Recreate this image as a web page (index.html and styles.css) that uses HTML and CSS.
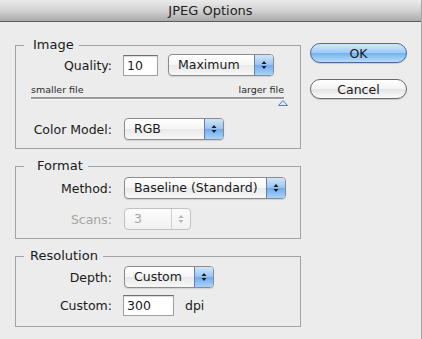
FILE: index.html
```html
<!DOCTYPE html>
<html lang="en">
<head>
    <meta charset="UTF-8">
    <title>JPEG Options</title>
    <link rel="stylesheet" href="styles.css">
</head>
<body>
    <div class="window">
        <div class="titlebar">JPEG Options</div>
        <div class="content">
            <div class="groups">
                <fieldset class="group group-image">
                    <legend>Image</legend>
                    <div class="row">
                        <span class="label">Quality:</span>
                        <span class="field field-quality">10</span>
                        <div class="popup popup-quality">
                            <span class="popup-text">Maximum</span>
                            <span class="popup-arrows">
                                <svg width="6" height="10" viewBox="0 0 6 10"><path d="M3 1L5.5 4H0.5Z M3 9L5.5 6H0.5Z" fill="#1c1c1c"/></svg>
                            </span>
                        </div>
                    </div>
                    <div class="slider">
                        <div class="slider-labels">
                            <span>smaller file</span>
                            <span>larger file</span>
                        </div>
                        <div class="slider-track"></div>
                        <div class="slider-thumb">
                            <svg width="10" height="6" viewBox="0 0 10 6"><path d="M5 0.5L9.5 5.5H0.5Z" fill="#dce8f6" stroke="#5d7fae"/></svg>
                        </div>
                    </div>
                    <div class="row row-color">
                        <span class="label">Color Model:</span>
                        <div class="popup popup-color">
                            <span class="popup-text">RGB</span>
                            <span class="popup-arrows">
                                <svg width="6" height="10" viewBox="0 0 6 10"><path d="M3 1L5.5 4H0.5Z M3 9L5.5 6H0.5Z" fill="#1c1c1c"/></svg>
                            </span>
                        </div>
                    </div>
                </fieldset>

                <fieldset class="group group-format">
                    <legend>Format</legend>
                    <div class="row">
                        <span class="label">Method:</span>
                        <div class="popup popup-method">
                            <span class="popup-text">Baseline (Standard)</span>
                            <span class="popup-arrows">
                                <svg width="6" height="10" viewBox="0 0 6 10"><path d="M3 1L5.5 4H0.5Z M3 9L5.5 6H0.5Z" fill="#1c1c1c"/></svg>
                            </span>
                        </div>
                    </div>
                    <div class="row row-scans">
                        <span class="label disabled">Scans:</span>
                        <div class="popup popup-scans disabled">
                            <span class="popup-text">3</span>
                            <span class="popup-arrows">
                                <svg width="6" height="10" viewBox="0 0 6 10"><path d="M3 1L5.5 4H0.5Z M3 9L5.5 6H0.5Z" fill="#b4b4b4"/></svg>
                            </span>
                        </div>
                    </div>
                </fieldset>

                <fieldset class="group group-resolution">
                    <legend>Resolution</legend>
                    <div class="row">
                        <span class="label">Depth:</span>
                        <div class="popup popup-depth">
                            <span class="popup-text">Custom</span>
                            <span class="popup-arrows">
                                <svg width="6" height="10" viewBox="0 0 6 10"><path d="M3 1L5.5 4H0.5Z M3 9L5.5 6H0.5Z" fill="#1c1c1c"/></svg>
                            </span>
                        </div>
                    </div>
                    <div class="row row-custom">
                        <span class="label">Custom:</span>
                        <span class="field field-custom">300</span>
                        <span class="unit">dpi</span>
                    </div>
                </fieldset>
            </div>

            <div class="buttons">
                <button type="button" class="btn btn-default">OK</button>
                <button type="button" class="btn">Cancel</button>
            </div>
        </div>
    </div>
</body>
</html>
```

FILE: styles.css
```css
body {
    margin: 0;
    font-family: "DejaVu Sans", sans-serif;
    font-size: 12.5px;
    color: #1a1a1a;
}
.window {
    width: 421px;
    height: 339px;
    background-color: #ececec;
    border-right: 1px solid #a4a4a4;
}
.titlebar {
    height: 21px;
    line-height: 21px;
    text-align: center;
    font-size: 13px;
    color: #222;
    background: linear-gradient(#ebebeb, #d2d2d2 50%, #aaaaaa);
    border-bottom: 1px solid #5e5e5e;
    border-top-right-radius: 5px;
}
.content {
    display: flex;
    padding: 15px 0 0 15px;
}
.groups {
    width: 286px;
}
.group {
    margin: 0 0 9px 0;
    padding: 0 0 8px 0;
    border: 1px solid #a3a3a3;
    min-inline-size: 0;
}
.group legend {
    line-height: 16px;
    font-size: 13px;
    padding: 0 5px 0 9px;
    margin-left: 8px;
}
.group-format legend {
    padding-left: 13px;
}
.group-resolution legend {
    padding-left: 6px;
}
.group-image {
    padding-top: 1px;
}
.group-format {
    padding-top: 3px;
}
.group-resolution {
    padding-top: 2px;
    padding-bottom: 10px;
}
.row {
    display: flex;
    align-items: center;
    height: 22px;
}
.label {
    width: 96px;
    margin-right: 11px;
    text-align: right;
    white-space: nowrap;
}
.disabled {
    color: #a5a5a5;
}
.row-color {
    margin-top: 12px;
}
.row-scans {
    margin-top: 9px;
}
.row-custom {
    margin-top: 6px;
}

.field {
    box-sizing: border-box;
    height: 21px;
    line-height: 20px;
    padding: 0 3px;
    background-color: #fff;
    border: 1px solid #a0a0a0;
    border-top-color: #6f6f6f;
    box-shadow: inset 0 1px 1px rgba(0, 0, 0, 0.15);
}
.field-quality {
    width: 35px;
}
.field-custom {
    width: 51px;
}
.unit {
    margin-left: 11px;
}

.popup {
    box-sizing: border-box;
    display: flex;
    height: 22px;
    margin-left: 1px;
    border: 1px solid #8c8c8c;
    border-radius: 4px;
    overflow: hidden;
    background: linear-gradient(#ffffff, #f5f5f5 50%, #e9e9e9 51%, #f7f7f7);
    box-shadow: 0 1px 1px rgba(0, 0, 0, 0.12);
}
.popup-text {
    flex: 1;
    padding-left: 9px;
    line-height: 20px;
    white-space: nowrap;
}
.popup-arrows {
    width: 18px;
    display: flex;
    align-items: center;
    justify-content: center;
    border-left: 1px solid #5e82b8;
    background: linear-gradient(#d2e5f8, #98c4f1 50%, #72abec 51%, #a9d3fa);
}
.popup-quality {
    width: 106px;
    margin-left: 10px;
}
.popup-color {
    width: 100px;
}
.popup-method {
    width: 162px;
}
.popup-depth {
    width: 90px;
}
.popup-scans {
    width: 67px;
    border-color: #c2c2c2;
    box-shadow: none;
    background: linear-gradient(#fbfbfb, #f1f1f1);
}
.popup-scans .popup-arrows {
    border-left-color: #d0d0d0;
    background: transparent;
}

.slider {
    margin: 8px 0 0 15px;
    width: 253px;
}
.slider-labels {
    display: flex;
    justify-content: space-between;
    font-size: 9.5px;
    line-height: 12px;
    color: #2a2a2a;
}
.slider-track {
    margin-top: 1px;
    height: 2px;
    background-color: #9a9a9a;
    border-bottom: 1px solid #f8f8f8;
}
.slider-thumb {
    display: flex;
    justify-content: flex-end;
    height: 6px;
    margin-right: -4px;
}

.buttons {
    display: flex;
    flex-direction: column;
    gap: 16px;
    margin: 6px 0 0 9px;
}
.btn {
    box-sizing: border-box;
    width: 97px;
    height: 20px;
    padding: 0;
    font-family: "DejaVu Sans", sans-serif;
    font-size: 12.5px;
    color: #1a1a1a;
    border: 1px solid #6a6a6a;
    border-radius: 10px;
    background: linear-gradient(#ffffff, #f3f3f3 50%, #e4e4e4 51%, #fafafa);
    box-shadow: 0 1px 1px rgba(0, 0, 0, 0.15);
}
.btn-default {
    border-color: #4e6a9c;
    background: linear-gradient(#d5e8fb, #9ccaf4 50%, #74b1ee 51%, #b7ddfc);
}
```
